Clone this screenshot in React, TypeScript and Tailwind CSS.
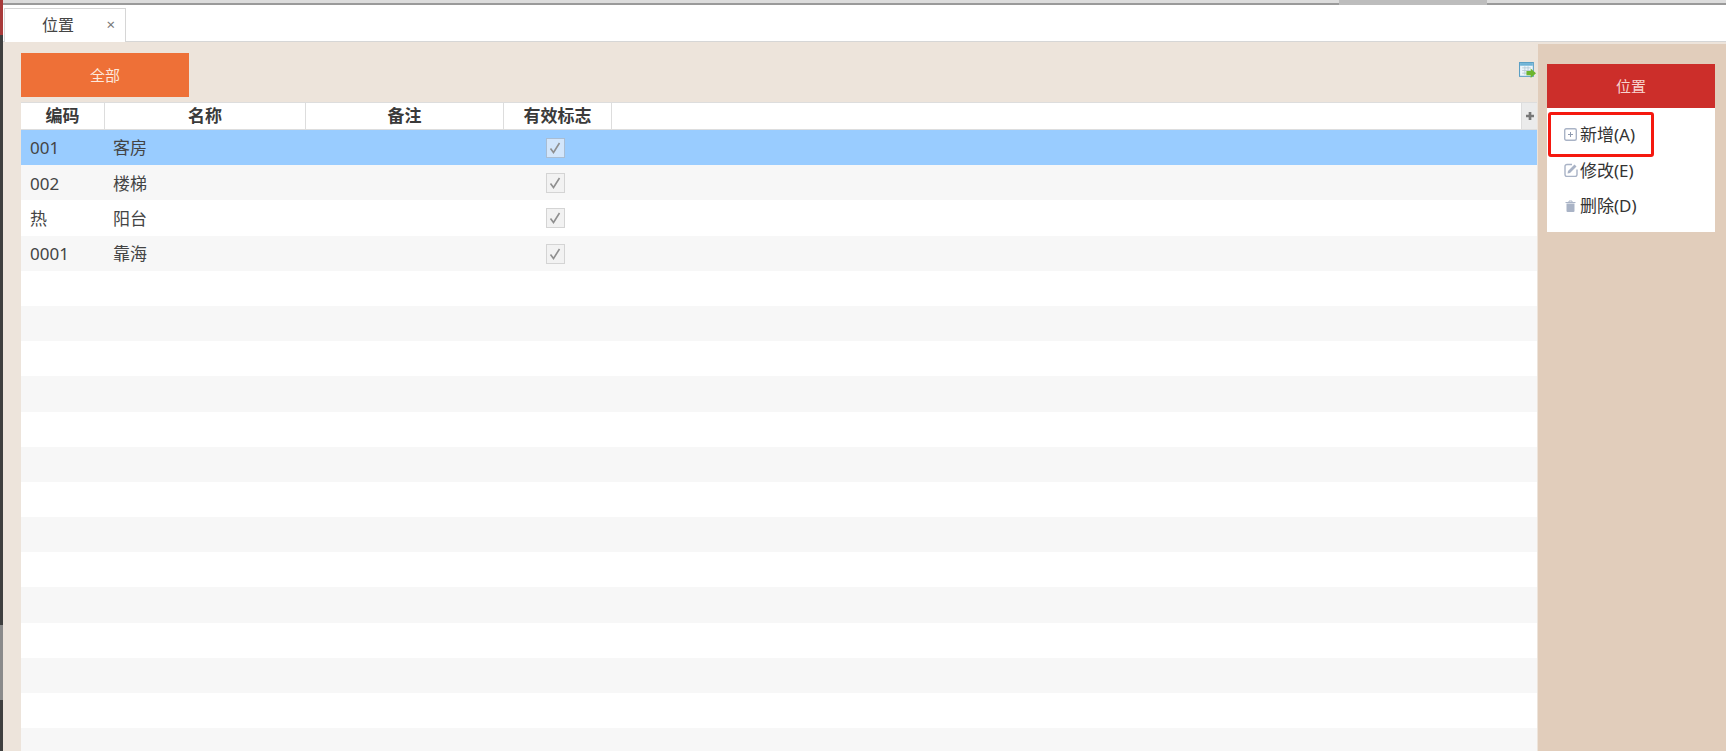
import React from "react";

const rows = [
  ["001", "客房"],
  ["002", "楼梯"],
  ["热", "阳台"],
  ["0001", "靠海"],
];
const blanks = Array.from({ length: 14 }, (_, i) => i);
const cols = "grid grid-cols-[84px_201px_198px_108px_1fr_16px]";

function Check({ selected }: { selected: boolean }) {
  return (
    <span className={`relative right-[3px] flex h-[20px] w-[19px] items-center justify-center border ${selected ? "border-[#a9bdd3] bg-[#d3e6fb]" : "border-[#d4d4d4] bg-[#f2f2f2]"}`}>
      <svg width="14" height="14" viewBox="0 0 14 14" fill="none">
        <path d="M2.5 7.500 L5.500 11.500 L11.500 2" stroke="#8f8f8f" strokeWidth="1.6" />
      </svg>
    </span>
  );
}

function Action({ icon, label }: { icon: React.ReactNode; label: string }) {
  return (
    <div className="flex h-[35.5px] items-center pl-[15px]">
      <span className="flex w-[17px] justify-center">{icon}</span>
      <span className="ml-[1px] text-[17px] text-[#333]">{label}</span>
    </div>
  );
}

export default function App() {
  return (
    <div className="flex h-[751px] w-full overflow-hidden bg-white font-['Noto_Sans','Noto_Sans_CJK_SC',sans-serif] text-[#333]">
      <div className="flex w-[3px] shrink-0 flex-col">
        <div className="h-[35px] bg-[#a83a3a]" />
        <div className="flex-1 bg-[#3f3f3f]" />
        <div className="h-[75px] bg-[#8a8a8a]" />
        <div className="h-[51px] bg-[#3f3f3f]" />
      </div>
      <div className="flex min-w-0 flex-1 flex-col">
        <div className="flex h-[5px] shrink-0 border-b-[2px] border-[#9a9a9a] bg-[#dcdcdc]">
          <div className="flex-1" />
          <div className="mr-[239px] h-[5px] w-[148px] bg-[#bdbdbd]" />
        </div>
        <div className="flex h-[37px] shrink-0 border-b border-[#d6d6d6] bg-white pt-[2px]">
          <div className="relative top-[1px] ml-[1px] flex w-[122px] items-center border-x border-t border-[#d6d6d6] bg-white pb-[2px] pl-[37px] pr-[10px]">
            <span className="text-[16px] text-[#444]">位置</span>
            <span className="ml-auto text-[15px] leading-none text-[#777]">×</span>
          </div>
        </div>
        <div className="flex min-h-0 flex-1 bg-[#ede4db]">
          <div className="flex min-w-0 flex-1 flex-col pl-[18px] pr-[1px] pt-[11px]">
            <div className="flex h-[44px] shrink-0 items-start justify-between">
              <div className="flex h-[44px] w-[168px] items-center justify-center bg-[#ee7037] text-[15px] text-[#fde8dc]">全部</div>
              <svg className="mr-[1px] mt-[9px]" width="17" height="17" viewBox="0 0 16 16" fill="none">
                <rect x="0.5" y="0.5" width="13" height="13" fill="#eef6fb" stroke="#5b9fc4" />
                <rect x="1" y="1" width="12" height="2.500" fill="#6fb3d6" />
                <path d="M3 5.500h8M3 8h8M3 10.500h8M5.500 4v8M8.500 4v8" stroke="#b5c9d5" strokeWidth="0.8" />
                <path d="M7 8.500h4V6l5 4.500-5 4.500v-2.500H7z" fill="#6cb52d" />
              </svg>
            </div>
            <div className="mt-[5px] flex min-h-0 flex-1 flex-col overflow-hidden border-t border-[#ddd] bg-white">
              <div className={`${cols} h-[27px] shrink-0 border-b border-[#ddd] bg-white text-[17px] font-bold text-[#3a3a3a]`}>
                {["编码", "名称", "备注", "有效标志", ""].map((h, i) => (
                  <div key={i} className={`flex items-center justify-center ${i < 4 ? "border-r border-[#ddd]" : ""}`}>{h}</div>
                ))}
                <div className="flex items-center justify-center border-l border-[#ddd] bg-[#ebebeb]">
                  <svg width="8" height="8" viewBox="0 0 9 9"><path d="M3 0h3v3h3v3H6v3H3V6H0V3h3z" fill="#777" /></svg>
                </div>
              </div>
              {rows.map((r, i) => (
                <div key={r[0]} className={`${cols} h-[35.2px] shrink-0 pt-[1px] text-[17px] text-[#444] ${i === 0 ? "bg-[#99ccff]" : i % 2 ? "bg-[#f7f7f7]" : "bg-white"}`}>
                  <div className="flex items-center pl-[9px]">{r[0]}</div>
                  <div className="flex items-center pl-[8px]">{r[1]}</div>
                  <div />
                  <div className="flex items-center justify-center"><Check selected={i === 0} /></div>
                </div>
              ))}
              {blanks.map((i) => (
                <div key={i} className={`h-[35.2px] shrink-0 ${i % 2 ? "bg-[#f7f7f7]" : "bg-white"}`} />
              ))}
            </div>
          </div>
          <div className="mt-[2px] w-[188px] shrink-0 bg-[#e1cdbb] pl-[9px] pr-[11px] pt-[20px]">
            <div className="flex h-[44px] items-center justify-center bg-[#cc2e2a] text-[15px] text-[#f8d5d0]">位置</div>
            <div className="relative h-[124px] bg-white pt-[9px]">
              <Action
                label="新增(A)"
                icon={
                  <svg width="13" height="13" viewBox="0 0 13 13" fill="none">
                    <rect x="0.7" y="0.7" width="11.600" height="11.600" rx="1.500" stroke="#a9b3c6" strokeWidth="1.400" />
                    <path d="M4 6.500h5M6.500 4v5" stroke="#8f9ab0" />
                  </svg>
                }
              />
              <Action
                label="修改(E)"
                icon={
                  <svg width="14" height="14" viewBox="0 0 14 14" fill="none">
                    <path d="M8 1.500H3a2 2 0 0 0-2 2v8a2 2 0 0 0 2 2h8a2 2 0 0 0 2-2V6.500" stroke="#a9b3c6" strokeWidth="1.400" />
                    <path d="M3.500 10.500 L4 8 L10.500 1.500 L12.500 3.500 L6 10z" fill="#a9b3c6" />
                  </svg>
                }
              />
              <Action
                label="删除(D)"
                icon={
                  <svg width="11" height="12" viewBox="0 0 11 12" fill="none">
                    <path d="M0.500 2.500h10" stroke="#a9b3c6" />
                    <path d="M4 2V1h3v1" stroke="#a9b3c6" />
                    <path d="M1.500 3.500h8V11a1 1 0 0 1-1 1h-6a1 1 0 0 1-1-1z" fill="#a9b3c6" />
                  </svg>
                }
              />
              <div className="absolute left-[1px] top-[4px] h-[45px] w-[106px] rounded-[3px] border-[3px] border-[#f5180f]" />
            </div>
          </div>
        </div>
      </div>
    </div>
  );
}
